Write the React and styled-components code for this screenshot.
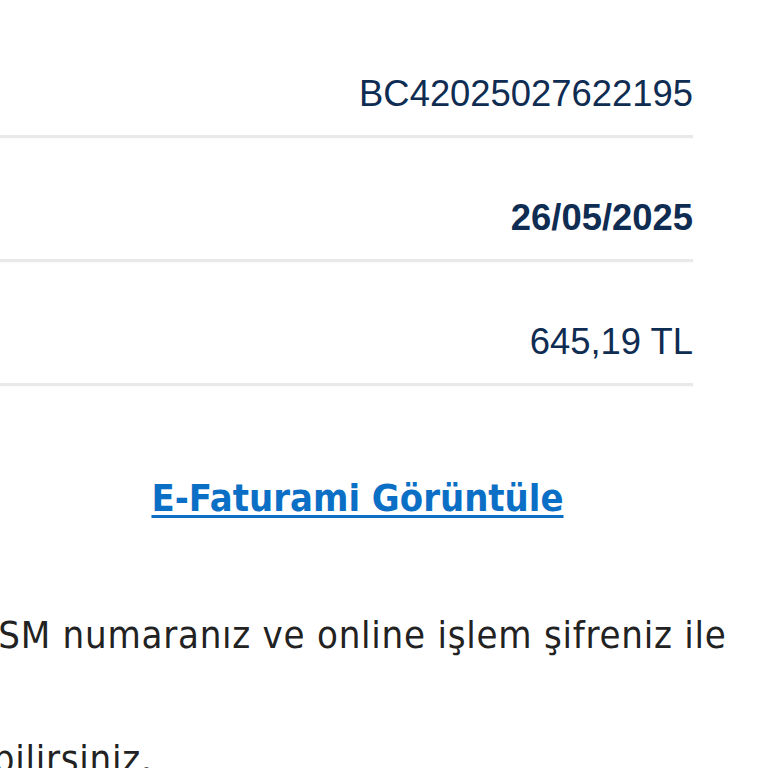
import React from 'react'
import styled, { createGlobalStyle } from 'styled-components'

const Global = createGlobalStyle`
    html, body {
        margin: 0;
        padding: 0;
        background: #ffffff;
        overflow: hidden;
    }
    body {
        width: 768px;
        height: 768px;
    }
`;

const Page = styled.main`
    width: 768px;
    height: 768px;
    overflow: hidden;
    padding-top: 14px;
    box-sizing: border-box;
`;

const Table = styled.section`
    width: 693px;
    display: flex;
    flex-direction: column;
`;

const Row = styled.div`
    display: flex;
    justify-content: flex-end;
    align-items: center;
    padding: 58px 0 20px;
    border-bottom: 3px solid #e9e9e9;
    box-shadow: 0 1px 2px rgba(0, 0, 0, 0.03);
`;

const Value = styled.span`
    font-family: "Liberation Sans", Arial, sans-serif;
    font-size: 36.4px;
    line-height: 43px;
    color: #0f2c52;
    font-weight: ${props => (props.$bold ? 700 : 400)};
`;

const LinkWrap = styled.div`
    width: 693px;
    padding-left: 22px;
    box-sizing: border-box;
    margin-top: 90px;
    text-align: center;
`;

const ViewLink = styled.a`
    font-family: "DejaVu Sans Condensed", "DejaVu Sans", sans-serif;
    font-stretch: condensed;
    font-weight: 700;
    font-size: 37.8px;
    line-height: 44px;
    color: #0b6fc6;
    text-decoration: underline;
    text-decoration-thickness: 3px;
    text-underline-offset: 4px;
`;

const Note = styled.p`
    margin: 53px 0 0 -29px;
    font-family: "DejaVu Sans Condensed", "DejaVu Sans", sans-serif;
    font-stretch: condensed;
    font-size: 38px;
    letter-spacing: 0.75px;
    line-height: 124px;
    color: #222222;
    white-space: nowrap;
`;

const rows = [
    { value: 'BC42025027622195' },
    { value: '26/05/2025', bold: true },
    { value: '645,19 TL' },
]

function App() {
    return (
        <>
            <Global />
            <Page>
                <Table>
                    {rows.map(row => (
                        <Row key={row.value}>
                            <Value $bold={row.bold}>{row.value}</Value>
                        </Row>
                    ))}
                </Table>
                <LinkWrap>
                    <ViewLink href="#">E-Faturami Görüntüle</ViewLink>
                </LinkWrap>
                <Note>
                    GSM numaranız ve online işlem şifreniz ile
                    <br />
                    ebilirsiniz.
                </Note>
            </Page>
        </>
    )
}

export default App
